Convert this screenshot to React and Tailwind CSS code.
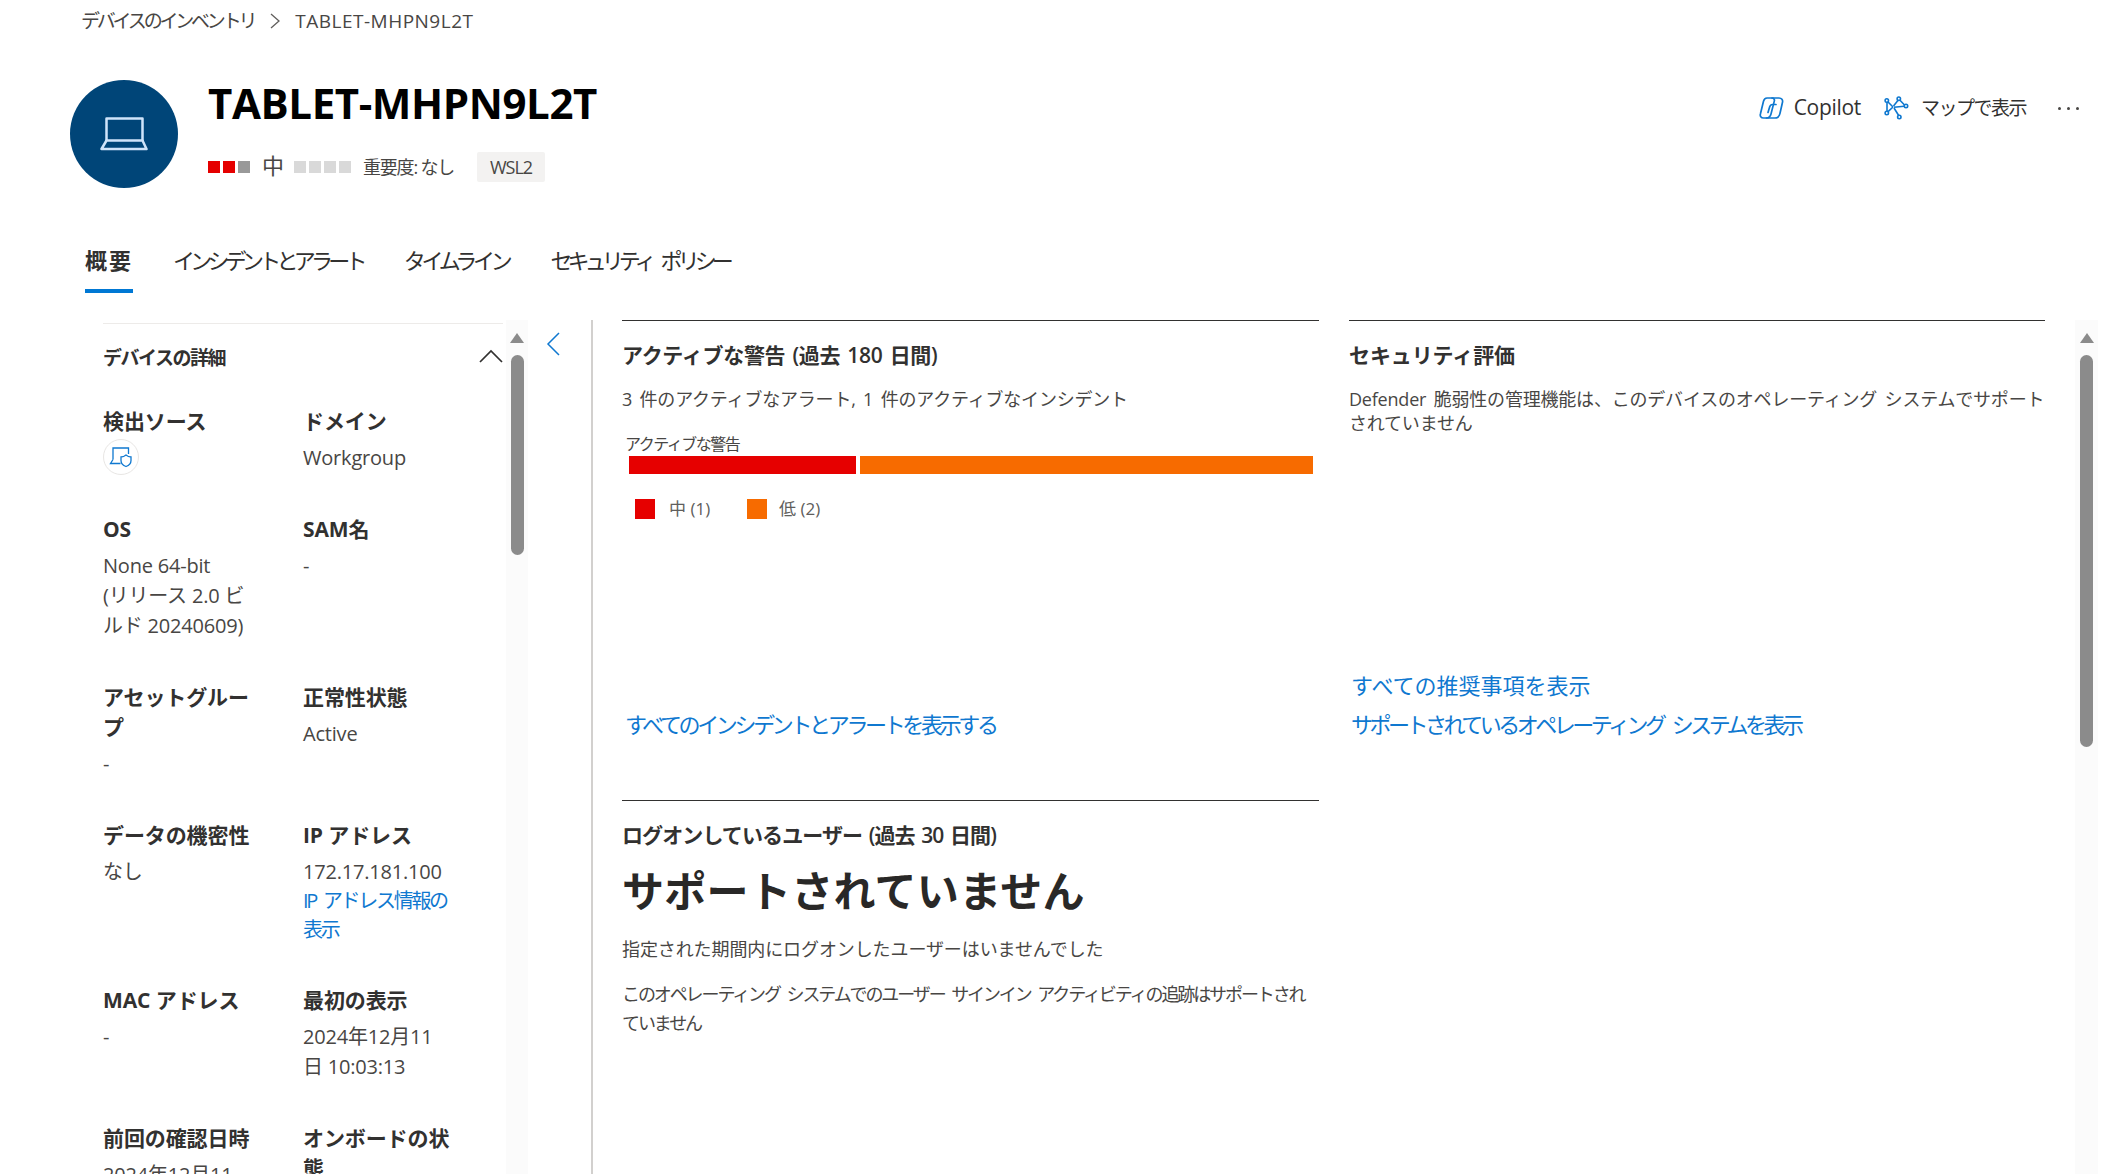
import React from "react";

const FONT = "font-['Open_Sans','Noto_Sans_CJK_JP',sans-serif]";

function Sq({ c }) {
  return <span className={`block w-[12px] h-[12px] ${c}`} />;
}

function CopilotIcon() {
  return (
    <svg width="25" height="24" viewBox="0 0 25 24" fill="none" stroke="#0f78d0" strokeWidth="1.700" strokeLinejoin="round" strokeLinecap="round">
      <path d="M8 2h5c1.800 0 2.800 1.400 2.300 3.100L12 18c-.6 2.300-2 4-4.500 4H4.500C2 22 .8 20 1.400 18L4.500 5.200C5 3.200 6.200 2 8 2z" />
      <path d="M13 2h7c2.700 0 4 2 3.500 4.300l-2.500 11c-.6 3-2.500 4.700-5 4.700H7.500" />
      <path d="M17 8.500h-3.500c-1.400 0-2.400.9-2.800 2.300L9 16.500" />
    </svg>
  );
}

function MapIcon() {
  return (
    <svg width="25" height="24" viewBox="0 0 25 24" fill="none" stroke="#0f78d0" strokeWidth="1.600">
      <path d="M3 5.500 3 16.500M3.800 5.800 9 11M3.800 15.800 9 11M9.500 10 14.500 3.800M15.500 3.800 21 9.500M10 11.200 20 10.300M10 12 15 20" />
      <circle cx="2.800" cy="4.500" r="1.700" fill="#fff" />
      <circle cx="2.800" cy="17" r="1.700" fill="#fff" />
      <circle cx="14.800" cy="2.700" r="1.700" fill="#fff" />
      <circle cx="22" cy="10" r="1.700" fill="#fff" />
      <circle cx="15.300" cy="21" r="1.700" fill="#fff" />
    </svg>
  );
}

function Laptop() {
  return (
    <svg width="48" height="34" viewBox="0 0 48 34" fill="none" stroke="#cfe4fa" strokeWidth="2.500" strokeLinejoin="round">
      <path d="M6.500 24V1.500h36V24" />
      <path d="M6.500 23.500h36l4 8.500H1.500z" />
    </svg>
  );
}

function SourceIcon() {
  return (
    <span className="flex w-[36px] h-[36px] mt-[-4px] mb-[-2px] rounded-full border border-[#e8e6e4] items-center justify-center">
      <svg width="24" height="22" viewBox="0 0 24 22" fill="none" stroke="#0f78d0" strokeWidth="1.300">
        <path d="M4 13.500V2h15.500v6" />
        <path d="M4 13.500 1.500 17.500h10" />
        <path d="M12 11c2 0 3.500-.7 5-2 1.500 1.300 3 2 5 2v3.500c0 3-2 5-5 6-3-1-5-3-5-6z" />
      </svg>
    </span>
  );
}

function Field({ label, children }) {
  return (
    <div className="text-[20px] leading-[30px] whitespace-nowrap">
      <div className="text-[21px] font-bold mb-[7px] text-[#323130] tracking-[-0.100px]">{label}</div>
      <div className="text-[#484644] tracking-[-0.200px]">{children}</div>
    </div>
  );
}

function Details() {
  return (
    <div className="w-[400px] mt-[3px] border-t border-[#edebe9] h-full">
      <div className="flex items-center justify-between h-[69px]">
        <span className="text-[19px] font-semibold tracking-[-1.500px] text-[#323130]">デバイスの詳細</span>
        <svg className="mb-[5px]" width="24" height="14" viewBox="0 0 24 14" fill="none" stroke="#323130" strokeWidth="1.700">
          <path d="M1 13 12 2l11 11" />
        </svg>
      </div>
      <div className="grid grid-cols-[200px_200px] gap-y-[41px] mt-[13px]">
        <Field label="検出ソース"><SourceIcon /></Field>
        <Field label="ドメイン">Workgroup</Field>
        <Field label="OS">None 64-bit<br />(リリース 2.0 ビ<br />ルド 20240609)</Field>
        <Field label="SAM名">-</Field>
        <Field label={<>アセットグルー<br />プ</>}>-</Field>
        <Field label="正常性状態">Active</Field>
        <Field label="データの機密性">なし</Field>
        <Field label="IP アドレス">
          <div className="leading-[29px]">
            172.17.181.100<br />
            <span className="text-[#0f78d0] tracking-[-2.300px] [word-spacing:4px]">IP アドレス情報の<br />表示</span>
          </div>
        </Field>
        <Field label="MAC アドレス">-</Field>
        <Field label="最初の表示">2024年12月11<br />日 10:03:13</Field>
        <Field label="前回の確認日時">2024年12月11<br />日 11:23:33</Field>
        <Field label={<>オンボードの状<br />態</>}>オンボード済み</Field>
      </div>
    </div>
  );
}

function Scrollbar({ h, w }) {
  return (
    <div className={`${w} h-full bg-[#fbfbfb] flex flex-col items-center pt-[13px] shrink-0`}>
      <span className="block w-0 h-0 border-x-[7px] border-x-transparent border-b-[10px] border-b-[#8b8b8b]" />
      <span className={`block w-[13px] ${h} mt-[12px] rounded-full bg-[#8b8b8b]`} />
    </div>
  );
}

function Rule() {
  return <div className="h-px bg-[#323130]" />;
}

export default function App() {
  return (
    <div className={`${FONT} w-[2122px] h-[1174px] overflow-hidden bg-white text-[#323130]`}>
      <div className="flex items-center h-[42px] pl-[81px] text-[19px] text-[#484644] whitespace-nowrap">
        <span className="tracking-[-3.200px]">デバイスのインベントリ</span>
        <svg className="ml-[16px] mr-[15px]" width="10" height="16" viewBox="0 0 10 16" fill="none" stroke="#605e5c" strokeWidth="1.300"><path d="m1 1 8 7-8 7" /></svg>
        <span className="tracking-[0.500px]">TABLET-MHPN9L2T</span>
      </div>

      <div className="flex items-start pl-[70px] pr-[43px] mt-[38px] h-[108px]">
        <div className="w-[108px] h-[108px] rounded-full bg-[#004578] flex items-center justify-center shrink-0"><Laptop /></div>
        <div className="ml-[30px] flex-1">
          <h1 className="text-[42px] leading-[48px] font-bold text-black mt-[-1px] tracking-[-0.400px] whitespace-nowrap">TABLET-MHPN9L2T</h1>
          <div className="flex items-center h-[30px] mt-[25px]">
            <div className="flex gap-[3px]"><Sq c="bg-[#e50000]" /><Sq c="bg-[#e50000]" /><Sq c="bg-[#999999]" /></div>
            <span className="ml-[12px] text-[22px] leading-[30px] mt-[-4px] text-[#484644]">中</span>
            <div className="flex gap-[3px] ml-[10px]"><Sq c="bg-[#d9d9d9]" /><Sq c="bg-[#d9d9d9]" /><Sq c="bg-[#d9d9d9]" /><Sq c="bg-[#d9d9d9]" /></div>
            <span className="ml-[12px] text-[18px] tracking-[-1.200px] text-[#484644] whitespace-nowrap">重要度: なし</span>
            <span className="ml-[23px] flex items-center justify-center w-[68px] h-[30px] bg-[#f3f2f1] rounded-[2px] text-[18px] tracking-[-1px] text-[#484644]">WSL2</span>
          </div>
        </div>
        <div className="flex items-center h-[30px] mt-[13px] text-[21px] text-[#323130] whitespace-nowrap">
          <CopilotIcon />
          <span className="ml-[10px] tracking-[-0.300px]">Copilot</span>
          <span className="ml-[23px]"><MapIcon /></span>
          <span className="ml-[12px] text-[19px] tracking-[-1.500px]">マップで表示</span>
          <span className="ml-[32px] flex gap-[6px]">
            <i className="block w-[3px] h-[3px] rounded-full bg-[#484644]" />
            <i className="block w-[3px] h-[3px] rounded-full bg-[#484644]" />
            <i className="block w-[3px] h-[3px] rounded-full bg-[#484644]" />
          </span>
        </div>
      </div>

      <div className="flex pl-[85px] gap-[40px] mt-[50px] h-[55px] pt-[4px] text-[22px] leading-[36px] whitespace-nowrap text-[#323130]">
        <div className="border-b-[4px] border-[#0078d4] font-semibold w-[48px] tracking-[2px] h-[51px]">概要</div>
        <div className="tracking-[-4.750px]">インシデントとアラート</div>
        <div className="ml-[1px] tracking-[-4.300px]">タイムライン</div>
        <div className="ml-[2px] tracking-[-4.900px] [word-spacing:8px]">セキュリティ ポリシー</div>
      </div>

      <div className="flex mt-[27px] h-[854px]">
        <div className="flex w-[593px] border-r-2 border-[#d2d0ce] pl-[103px] shrink-0">
          <Details />
          <div className="ml-[3px]"><Scrollbar h="h-[200px]" w="w-[22px]" /></div>
          <svg className="ml-[18px] mt-[12px]" width="14" height="24" viewBox="0 0 14 24" fill="none" stroke="#0f78d0" strokeWidth="1.500"><path d="M13 1 2 12l11 11" /></svg>
        </div>

        <div className="flex flex-1 ml-[29px]">
          <div className="w-[697px] shrink-0">
            <section className="h-[480px] flex flex-col">
              <Rule />
              <h2 className="text-[21px] leading-[30px] font-semibold mt-[19px] tracking-[-0.300px] [word-spacing:2px] whitespace-nowrap">アクティブな警告 (過去 180 日間)</h2>
              <p className="text-[18px] leading-[24px] mt-[17px] text-[#484644] tracking-[-0.200px] [word-spacing:3px] whitespace-nowrap">3 件のアクティブなアラート, 1 件のアクティブなインシデント</p>
              <div className="ml-[3px] mt-[23px] text-[16px] leading-[20px] text-[#484644] tracking-[-1.500px] whitespace-nowrap">アクティブな警告</div>
              <div className="flex ml-[7px] w-[684px] h-[18px] mt-[2px] gap-[4px]">
                <div className="w-[227px] bg-[#e60000]" />
                <div className="flex-1 bg-[#f76b00]" />
              </div>
              <div className="flex items-center ml-[13px] mt-[22px] text-[17px] text-[#605e5c] whitespace-nowrap">
                <span className="block w-[20px] h-[20px] bg-[#e60000]" />
                <span className="ml-[14px] w-[78px] tracking-[0px]">中 (1)</span>
                <span className="block w-[20px] h-[20px] bg-[#f76b00]" />
                <span className="ml-[12px] tracking-[0px]">低 (2)</span>
              </div>
              <div className="flex-1" />
              <a className="ml-[3px] mb-[61px] text-[22px] leading-[30px] text-[#0f78d0] tracking-[-3.350px] whitespace-nowrap">すべてのインシデントとアラートを表示する</a>
            </section>
            <section>
              <Rule />
              <h2 className="text-[21px] leading-[30px] font-semibold mt-[19px] tracking-[-0.900px] [word-spacing:2px] whitespace-nowrap">ログオンしているユーザー (過去 30 日間)</h2>
              <div className="text-[42px] leading-[56px] font-bold mt-[13px] text-[#292827] tracking-[0.300px] whitespace-nowrap">サポートされていません</div>
              <p className="text-[18px] leading-[24px] mt-[18px] text-[#484644] tracking-[-0.100px] whitespace-nowrap">指定された期間内にログオンしたユーザーはいませんでした</p>
              <p className="text-[18px] leading-[29px] mt-[19px] text-[#484644] tracking-[-2.100px] [word-spacing:4px] whitespace-nowrap">このオペレーティング システムでのユーザー サインイン アクティビティの追跡はサポートされ<br />ていません</p>
            </section>
          </div>

          <section className="w-[696px] ml-[30px] shrink-0 h-[480px] flex flex-col">
            <Rule />
            <h2 className="text-[21px] leading-[30px] font-semibold mt-[19px] tracking-[-0.100px] whitespace-nowrap">セキュリティ評価</h2>
            <p className="text-[18px] leading-[24px] mt-[17px] text-[#484644] tracking-[-0.200px] [word-spacing:3px] whitespace-nowrap">Defender 脆弱性の管理機能は、このデバイスのオペレーティング システムでサポート<br />されていません</p>
            <div className="flex-1" />
            <a className="ml-[2px] text-[22px] leading-[30px] text-[#0f78d0] tracking-[0px] whitespace-nowrap">すべての推奨事項を表示</a>
            <a className="ml-[2px] mt-[9px] mb-[61px] text-[22px] leading-[30px] text-[#0f78d0] tracking-[-3.500px] [word-spacing:6px] whitespace-nowrap">サポートされているオペレーティング システムを表示</a>
          </section>

          <div className="ml-[30px]"><Scrollbar h="h-[392px]" w="w-[23px]" /></div>
        </div>
      </div>
    </div>
  );
}
